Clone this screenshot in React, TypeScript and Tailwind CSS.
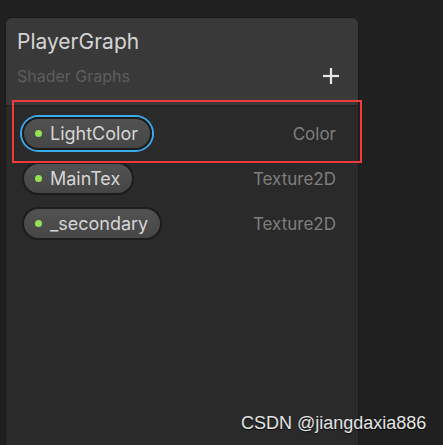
import React from "react";

const rows = [
  { name: "LightColor", type: "Color", selected: true },
  { name: "MainTex", type: "Texture2D", selected: false },
  { name: "_secondary", type: "Texture2D", selected: false },
];

export default function App() {
  return (
    <div
      className="relative w-[443px] h-[445px] overflow-hidden bg-[#202020] pt-[17px] pl-[5px]"
      style={{ fontFamily: "Inter, 'Noto Sans', sans-serif" }}
    >
      <div className="w-[354px] h-[440px] rounded-t-[7px] border border-[#191919] bg-[#2a2a2a] flex flex-col overflow-hidden">
        <div className="h-[89px] bg-[#393939] border-b-2 border-[#242424] pl-[11px] pr-[19px] pt-[11px] flex flex-col">
          <div className="text-[21px] leading-[26px] text-[#d4d4d4]">PlayerGraph</div>
          <div className="mt-[11px] flex items-center justify-between">
            <span className="text-[16px] leading-[20px] text-[#5e5e5e]">Shader Graphs</span>
            <svg width="16" height="16" viewBox="0 0 16 16" className="mt-[-1px]">
              <rect x="0" y="6.9" width="16" height="2.2" fill="#e6e6e6" />
              <rect x="6.9" y="0" width="2.2" height="16" fill="#e6e6e6" />
            </svg>
          </div>
        </div>
        <div className="pt-[4px] flex flex-col">
          {rows.map((r) => (
            <div key={r.name} className="h-[45px] flex items-center justify-between pl-[16px] pr-[22px]">
              <div
                className={
                  "h-[33px] rounded-full border-2 border-[#1c1c1c] bg-gradient-to-b from-[#525252] to-[#464646] flex items-center pl-[11px] pr-[12px] gap-[8px] " +
                  (r.selected ? "ring-2 ring-[#3aabec]" : "")
                }
              >
                <span className="w-[7px] h-[7px] rounded-full bg-[#93e255]" />
                <span className="text-[18px] leading-[20px] text-[#d6d6d6]">{r.name}</span>
              </div>
              <span className="text-[17px] leading-[20px] text-[#7e7e7e]">{r.type}</span>
            </div>
          ))}
        </div>
      </div>
      <div className="absolute left-[12px] top-[100px] w-[350px] h-[63px] border-2 border-[#ef3b3b]" />
      <div
        className="absolute left-[241px] top-[413px] text-[18px] leading-[21px] text-[#e4e4e4]"
        style={{ fontFamily: "'Liberation Sans', Arial, sans-serif", textShadow: "0 1px 1px rgba(0,0,0,0.8)" }}
      >
        CSDN @jiangdaxia886
      </div>
    </div>
  );
}
